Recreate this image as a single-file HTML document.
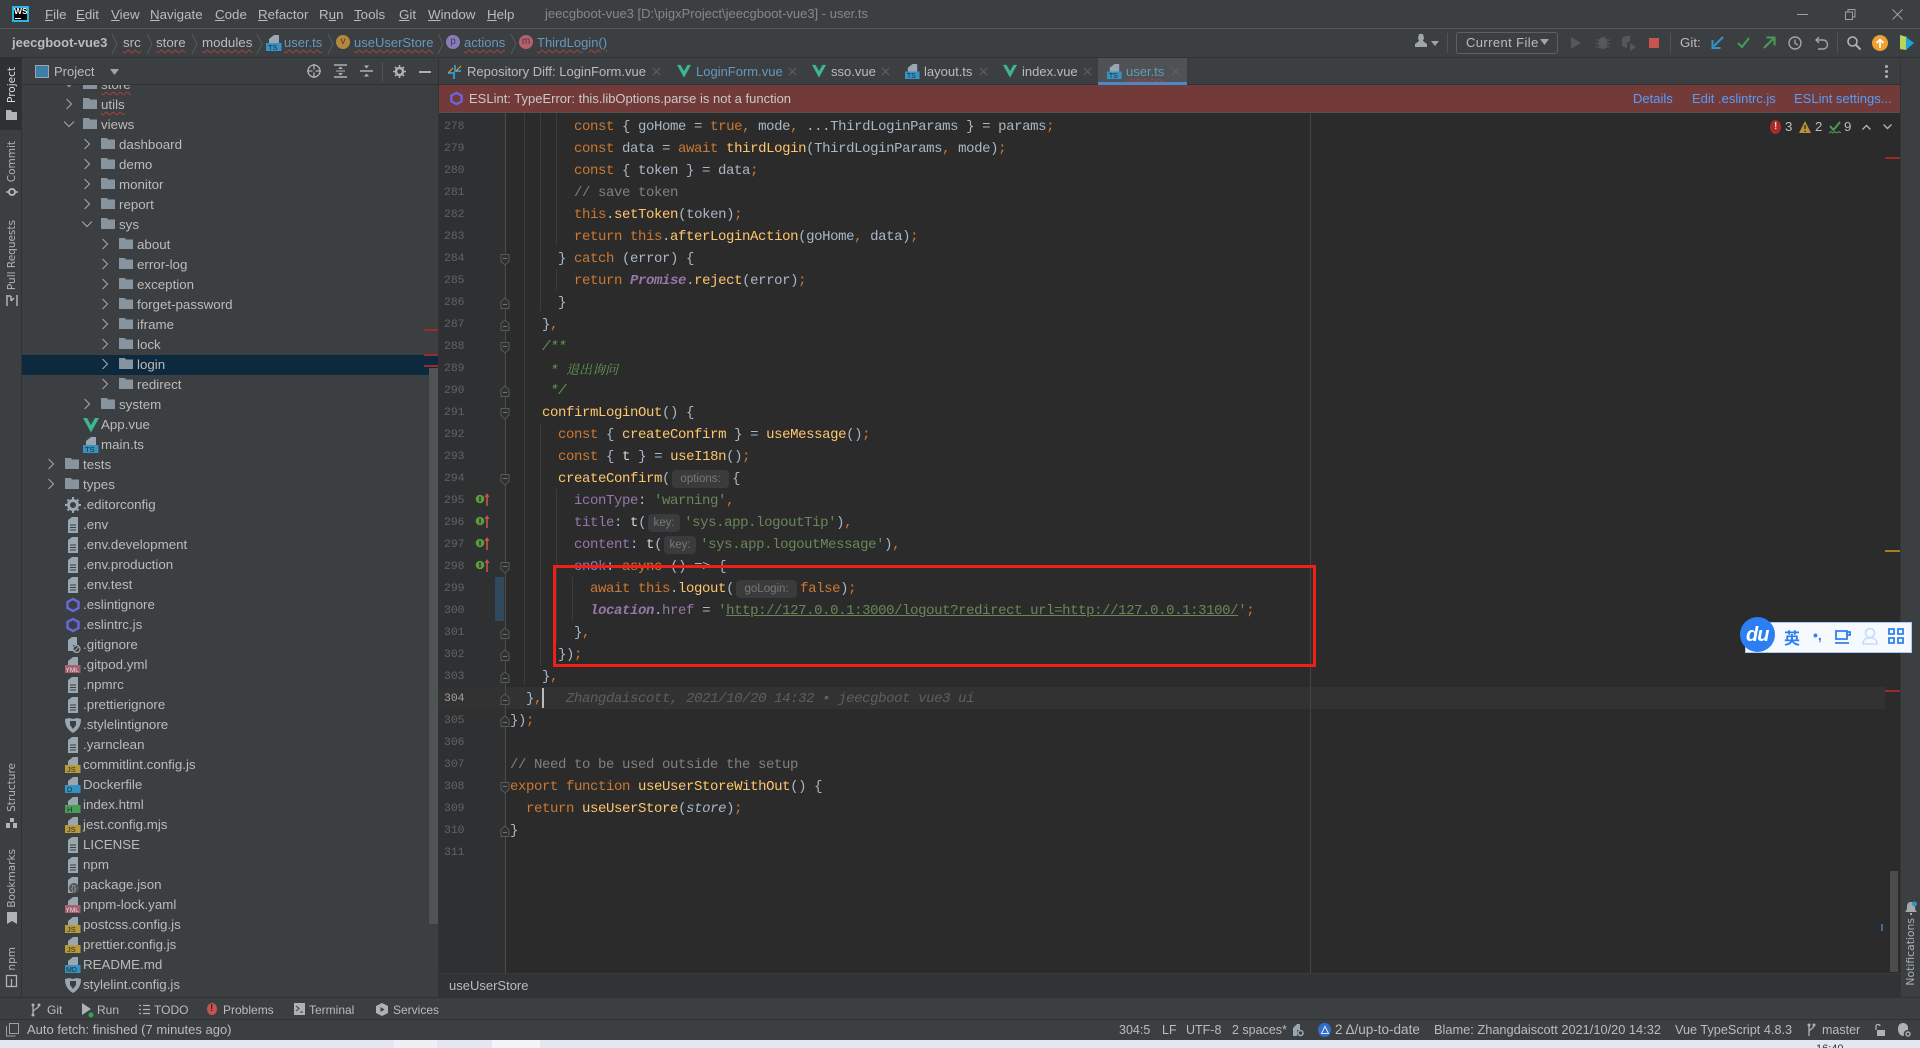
<!DOCTYPE html>
<html lang="en"><head><meta charset="utf-8"><title>user.ts</title>
<style>
html,body{margin:0;padding:0;width:1920px;height:1048px;overflow:hidden;background:#3c3f41}
body{position:relative;font:13.33px "Liberation Sans",sans-serif;color:#bbb}
.a{position:absolute;white-space:nowrap}
.b{position:absolute}
svg{position:absolute;overflow:visible}
.t{position:absolute;white-space:nowrap;height:20px;line-height:20px}
.w{text-decoration:underline wavy #a8403c 1px;text-underline-offset:2px}
.nb{font-size:13px}
.tb{font-size:13px}
.bt{font-size:12px}
#tree{position:absolute;left:22px;top:85px;width:416px;height:912px;overflow:hidden;background:#3c3f41}
#tree .in{position:absolute;left:-22px;top:-10px;width:438px}
.r{position:relative;height:20px;line-height:20px;white-space:nowrap}
.r svg{top:2px}
.r svg.c{top:1px}
.d1{padding-left:83px}.d2{padding-left:101px}.d3{padding-left:119px}.d4{padding-left:137px}
.d1 .i{left:65px}.d2 .i{left:83px}.d3 .i{left:101px}.d4 .i{left:119px}
.d1 .c{left:43px}.d2 .c{left:61px}.d3 .c{left:79px}.d4 .c{left:97px}
.l{position:absolute;left:510px;height:22px;line-height:22px;white-space:pre;font:14px/22px "Liberation Mono","Noto Sans CJK SC",monospace;letter-spacing:-.4px;color:#a9b7c6}
.n{position:absolute;left:444px;height:22px;line-height:22px;font:11.4px/22px "Liberation Mono",monospace;color:#606366}
.k{color:#cc7832}.f{color:#ffc66d}.s{color:#6a8759}.p{color:#9876aa}.m{color:#808080}.o{color:#629755;font-style:italic}
.h{display:inline-block;position:relative;height:22px;vertical-align:top;letter-spacing:0}
.h b{position:absolute;top:2px;left:2px;bottom:2px;background:#3a3b3c;border-radius:4px;font:normal 11.5px/18px "Liberation Sans",sans-serif;color:#787878;text-align:center}
.g{position:absolute;width:1px;background:#3b3b3b}
.v{position:absolute;writing-mode:vertical-rl;transform:rotate(180deg);font:10.5px/14px "DejaVu Sans",sans-serif;color:#b4b4b4;white-space:nowrap}
</style></head><body>
<svg width="0" height="0" style="position:absolute">
<defs>
<symbol id="fo" viewBox="0 0 16 16"><path d="M0 1h6l1 1.500H14V12H0z" fill="#87949d"/></symbol>
<symbol id="cr" viewBox="0 0 16 16"><path d="M5.500 3l5 5-5 5" fill="none" stroke="#9da0a2" stroke-width="1.200"/></symbol>
<symbol id="cd" viewBox="0 0 16 16"><path d="M3 5.500l5 5 5-5" fill="none" stroke="#9da0a2" stroke-width="1.200"/></symbol>
<symbol id="doc" viewBox="0 0 16 16"><path d="M3 3l4-3h6v16H3z" fill="#9aa7b0"/><path d="M5 8h6M5 10.500h6M5 13h6" stroke="#3c3f41" stroke-width="1.100"/></symbol>
<symbol id="vue" viewBox="0 0 16 16"><path d="M0 1h4l4 7 4-7h4L8 15.500z" fill="#3fb68b"/><path d="M4 1h2.500L8 4l1.500-3H12L8 8z" fill="#35495e" opacity=".55"/></symbol>
<symbol id="ts" viewBox="0 0 16 16"><path d="M3 8V4l5-4h5v8z" fill="#9aa7b0"/><rect y="8" width="15.500" height="8" fill="#3592c4"/><text x="2" y="15" font-size="7.500" font-family="Liberation Sans" fill="#2b2b2b">TS</text></symbol>
<symbol id="js" viewBox="0 0 16 16"><path d="M3 8V4l5-4h5v8z" fill="#9aa7b0"/><rect y="8" width="15.500" height="8" fill="#b99a3a"/><text x="2" y="15" font-size="7.500" font-family="Liberation Sans" fill="#2b2b2b">JS</text></symbol>
<symbol id="dk" viewBox="0 0 16 16"><path d="M3 8V4l5-4h5v8z" fill="#9aa7b0"/><rect y="8" width="15.500" height="8" fill="#3592c4"/><text x="2" y="15" font-size="7.500" font-family="Liberation Sans" fill="#2b2b2b">D</text></symbol>
<symbol id="ht" viewBox="0 0 16 16"><path d="M3 8V4l5-4h5v8z" fill="#9aa7b0"/><rect y="8" width="15.500" height="8" fill="#499c54"/><text x="2" y="15" font-size="7.500" font-family="Liberation Sans" fill="#2b2b2b">H</text></symbol>
<symbol id="md" viewBox="0 0 16 16"><path d="M3 8V4l5-4h5v8z" fill="#9aa7b0"/><rect y="8" width="15.500" height="8" fill="#3592c4"/><text x="1" y="15" font-size="7" font-family="Liberation Sans" fill="#2b2b2b">MD</text></symbol>
<symbol id="ym" viewBox="0 0 16 16"><path d="M3 8V4l5-4h5v8z" fill="#9aa7b0"/><rect y="8" width="15.500" height="8" fill="#a55f70"/><text x=".5" y="15" font-size="6.500" font-family="Liberation Sans" fill="#e6d6da">YML</text></symbol>
<symbol id="es" viewBox="0 0 16 16"><path d="M8 2l5.500 3v6L8 14l-5.500-3V5z" fill="none" stroke="#6868e0" stroke-width="2.400"/></symbol>
<symbol id="ge" viewBox="0 0 16 16"><circle cx="8" cy="8" r="4.500" fill="none" stroke="#9aa7b0" stroke-width="3"/><path d="M8 0v16M0 8h16M2.500 2.500l11 11M13.500 2.500l-11 11" stroke="#9aa7b0" stroke-width="2" stroke-dasharray="2.500 11 2.500"/></symbol>
<symbol id="gi" viewBox="0 0 16 16"><path d="M3 9V3l4-3h5v8H8v6H3z" fill="#9aa7b0"/><circle cx="11.500" cy="12" r="3.500" fill="none" stroke="#9aa7b0" stroke-width="1.200"/><path d="M9 14.500l5-5" stroke="#9aa7b0"/></symbol>
<symbol id="sh" viewBox="0 0 16 16"><path d="M0 2l4-1 4 1 4-1 4 1c0 7-3 11-8 14C3 13 0 9 0 2z" fill="#9aa7b0"/><path d="M5 4h6v4l-3 4-3-4z" fill="#3c3f41"/></symbol>
<symbol id="pk" viewBox="0 0 16 16"><path d="M3 9V3l4-3h6v8l-6 8H3z" fill="#9aa7b0"/><circle cx="9" cy="11" r="5" fill="#545759"/><text x="6" y="14" font-size="8" font-family="Liberation Sans" fill="#9aa7b0">{}</text></symbol>
<symbol id="fs" viewBox="0 0 10 12"><path d="M1 .500h8v7l-4 3.500-4-3.500z" fill="#2f3031" stroke="#565859"/><path d="M3 4.500h4" stroke="#707274"/></symbol>
<symbol id="fe" viewBox="0 0 10 12"><path d="M1 11.500h8v-7l-4-3.500-4 3.500z" fill="#2f3031" stroke="#565859"/><path d="M3 7.500h4" stroke="#707274"/></symbol>
<symbol id="ga" viewBox="0 0 16 16"><circle cx="5" cy="8" r="4.300" fill="#5a9e3c"/><path d="M5 5.500v5" stroke="#2b2b2b" stroke-width="1.400"/><path d="M12 15V4" stroke="#c75450" stroke-width="1.600"/><path d="M9.500 6L12 2l2.500 4z" fill="#c75450"/></symbol>
<symbol id="nc" viewBox="0 0 8 22"><path d="M1 1l5 10-5 10" fill="none" stroke="#555859"/></symbol>
<symbol id="x" viewBox="0 0 10 10"><path d="M1 1l8 8M9 1l-8 8" stroke="#5f6365" stroke-width="1.100"/></symbol>
</defs>
</svg>

<!-- title bar -->
<div class="b" style="left:0;top:28px;width:1920px;height:1px;background:#555"></div>
<div class="b" style="left:12px;top:6px;width:13px;height:12px;background:#000;border:2px solid #25b7e8"></div>
<div class="a" style="left:14px;top:6px;color:#fff;font:bold 8.500px/11px 'Liberation Sans',sans-serif">WS</div>
<div class="b" style="left:15px;top:18px;width:6px;height:1px;background:#fff"></div>
<div class="t" style="left:45px;top:5px"><u>F</u>ile</div>
<div class="t" style="left:76px;top:5px"><u>E</u>dit</div>
<div class="t" style="left:111px;top:5px"><u>V</u>iew</div>
<div class="t" style="left:150px;top:5px"><u>N</u>avigate</div>
<div class="t" style="left:215px;top:5px"><u>C</u>ode</div>
<div class="t" style="left:258px;top:5px"><u>R</u>efactor</div>
<div class="t" style="left:319px;top:5px">R<u>u</u>n</div>
<div class="t" style="left:354px;top:5px"><u>T</u>ools</div>
<div class="t" style="left:399px;top:5px"><u>G</u>it</div>
<div class="t" style="left:428px;top:5px"><u>W</u>indow</div>
<div class="t" style="left:487px;top:5px"><u>H</u>elp</div>
<div class="t" style="left:545px;top:4px;color:#85898b;font-size:13px">jeecgboot-vue3 [D:\pigxProject\jeecgboot-vue3] - user.ts</div>
<div class="b" style="left:1797px;top:14px;width:11px;height:1px;background:#a0a0a0"></div>
<svg style="left:1845px;top:9px" width="11" height="11"><path d="M.5 3h7v7.500h-7zM3 3V.5h7v7.500H7.500" fill="none" stroke="#a0a0a0"/></svg>
<svg style="left:1892px;top:9px" width="11" height="11"><path d="M.5.500l10 10M10.500.500l-10 10" stroke="#a0a0a0"/></svg>

<!-- nav bar -->
<div class="b" style="left:0;top:57px;width:1920px;height:1px;background:#2f3133"></div>
<div class="t" style="left:12px;top:33px;font-weight:bold;color:#bbb;font-size:13px">jeecgboot-vue3</div>
<svg style="left:111px;top:33px" width="8" height="22"><use href="#nc"/></svg>
<div class="t w" style="left:123px;top:33px">src</div>
<svg style="left:146px;top:33px" width="8" height="22"><use href="#nc"/></svg>
<div class="t w" style="left:156px;top:33px">store</div>
<svg style="left:191px;top:33px" width="8" height="22"><use href="#nc"/></svg>
<div class="t w" style="left:202px;top:33px">modules</div>
<svg style="left:256px;top:33px" width="8" height="22"><use href="#nc"/></svg>
<svg style="left:266px;top:35px" width="16" height="16"><use href="#ts"/></svg>
<div class="t w nb" style="left:284px;top:33px;color:#6897bb">user.ts</div>
<svg style="left:327px;top:33px" width="8" height="22"><use href="#nc"/></svg>
<div class="a" style="left:336px;top:35px;width:14px;height:14px;border-radius:50%;background:#b6873a;color:#3c3f41;font-size:10px;line-height:14px;text-align:center">v</div>
<div class="t w nb" style="left:354px;top:33px;color:#6897bb">useUserStore</div>
<svg style="left:437px;top:33px" width="8" height="22"><use href="#nc"/></svg>
<div class="a" style="left:446px;top:35px;width:14px;height:14px;border-radius:50%;background:#8a7bbd;color:#3c3f41;font-size:10px;line-height:14px;text-align:center">p</div>
<div class="t w nb" style="left:464px;top:33px;color:#6897bb">actions</div>
<svg style="left:510px;top:33px" width="8" height="22"><use href="#nc"/></svg>
<div class="a" style="left:519px;top:35px;width:14px;height:14px;border-radius:50%;background:#b5606c;color:#3c3f41;font-size:10px;line-height:14px;text-align:center">m</div>
<div class="t w nb" style="left:537px;top:33px;color:#6897bb">ThirdLogin()</div>

<svg style="left:1414px;top:33px" width="16" height="16"><path d="M5 1h4l1 4-1 3 4 3v3H1v-3l4-3-1-3z" fill="#a0a5a8"/></svg>
<svg style="left:1431px;top:41px" width="8" height="5"><path d="M0 0h8L4 5z" fill="#a0a5a8"/></svg>
<div class="b" style="left:1447px;top:33px;width:1px;height:20px;background:#515456"></div>
<div class="b" style="left:1456px;top:32px;width:100px;height:20px;border:1px solid #5e6163;border-radius:3px"></div>
<div class="t" style="left:1466px;top:33px;font-size:13px;letter-spacing:.4px">Current File</div>
<svg style="left:1540px;top:39px" width="9" height="6"><path d="M0 0h9L4.500 6z" fill="#a0a5a8"/></svg>
<svg style="left:1570px;top:36px" width="12" height="14"><path d="M1 1l10 6-10 6z" fill="#555859"/></svg>
<svg style="left:1596px;top:35px" width="14" height="15"><ellipse cx="7" cy="8" rx="4.500" ry="6" fill="#555859"/><path d="M0 5h14M0 8.500h14M0 12h14" stroke="#555859"/></svg>
<svg style="left:1621px;top:35px" width="15" height="16"><path d="M1 3l4-2h4v5L6 8v5L1 11z" fill="#555859"/><path d="M9 8l6 4-6 4z" fill="#555859"/></svg>
<div class="b" style="left:1649px;top:38px;width:10px;height:10px;background:#c75450"></div>
<div class="b" style="left:1670px;top:33px;width:1px;height:20px;background:#515456"></div>
<div class="t" style="left:1680px;top:33px">Git:</div>
<svg style="left:1711px;top:36px" width="13" height="13"><path d="M12 1L3 10M1.500 4v8h8" fill="none" stroke="#3592c4" stroke-width="2"/></svg>
<svg style="left:1737px;top:37px" width="13" height="11"><path d="M1 6l4 4 7-9" fill="none" stroke="#499c54" stroke-width="2"/></svg>
<svg style="left:1763px;top:36px" width="13" height="13"><path d="M1 12l9-9M3.500 1.500H11.500v8" fill="none" stroke="#499c54" stroke-width="2"/></svg>
<svg style="left:1788px;top:36px" width="14" height="14"><circle cx="7" cy="7" r="6" fill="none" stroke="#a0a5a8" stroke-width="1.400"/><path d="M7 3.500V7.500l3 1.500" fill="none" stroke="#a0a5a8" stroke-width="1.300"/></svg>
<svg style="left:1815px;top:36px" width="13" height="14"><path d="M4 1L1 4l3 3M1.500 4H8c6 0 6 9 0 9H3" fill="none" stroke="#a0a5a8" stroke-width="1.400"/></svg>
<div class="b" style="left:1837px;top:33px;width:1px;height:20px;background:#515456"></div>
<svg style="left:1847px;top:36px" width="14" height="14"><circle cx="5.500" cy="5.500" r="4.500" fill="none" stroke="#afb1b3" stroke-width="1.600"/><path d="M9 9l4.500 4.500" stroke="#afb1b3" stroke-width="2"/></svg>
<div class="b" style="left:1872px;top:35px;width:16px;height:16px;border-radius:50%;background:#f0a030"></div>
<svg style="left:1875px;top:38px" width="10" height="10"><path d="M5 10V2M1.500 5L5 1.500 8.500 5" fill="none" stroke="#fff" stroke-width="1.600"/></svg>
<svg style="left:1899px;top:35px" width="15" height="16"><path d="M1 0l7 2-1 13-6-1z" fill="#b7d558"/><path d="M7 2l8 6-8 7z" fill="#1ba5d8"/></svg>

<!-- left stripe -->
<div class="b" style="left:21px;top:58px;width:1px;height:939px;background:#323232"></div>
<div class="b" style="left:0;top:58px;width:21px;height:72px;background:#2e3032"></div>
<div class="v" style="left:5px;top:67px;color:#ddd">Project</div>
<svg style="left:6px;top:110px" width="12" height="10"><path d="M0 0h5l1 2h5v8H0z" fill="#b0b4b6"/></svg>
<div class="v" style="left:5px;top:141px">Commit</div>
<svg style="left:6px;top:186px" width="12" height="12"><circle cx="6" cy="6" r="3" fill="none" stroke="#b0b4b6" stroke-width="2"/><path d="M0 6h3M9 6h3" stroke="#b0b4b6" stroke-width="1.500"/></svg>
<div class="v" style="left:5px;top:220px">Pull Requests</div>
<svg style="left:6px;top:295px" width="12" height="11"><path d="M1 0v11M11 0v11M1 1h4M8 3L5 6M5 1v5" fill="none" stroke="#b0b4b6" stroke-width="1.500"/></svg>
<div class="v" style="left:5px;top:763px">Structure</div>
<svg style="left:6px;top:818px" width="12" height="10"><path d="M4 0h4v4H4zM0 5h4v5H0zM7 5h4v5H7z" fill="#b0b4b6"/></svg>
<div class="v" style="left:5px;top:849px">Bookmarks</div>
<svg style="left:7px;top:912px" width="10" height="12"><path d="M0 0h10v12L5 9l-5 3z" fill="#b0b4b6"/></svg>
<div class="v" style="left:5px;top:947px">npm</div>
<svg style="left:6px;top:975px" width="11" height="12"><path d="M.5.500h10v11H.5zM5.500 4v7.500" fill="none" stroke="#b0b4b6" stroke-width="1.300"/></svg>

<!-- project header -->
<div class="b" style="left:22px;top:84px;width:416px;height:1px;background:#323232"></div>
<svg style="left:35px;top:65px" width="14" height="13"><rect x=".5" y=".5" width="13" height="12" fill="#3d7ea6" stroke="#9aa7b0"/></svg>
<div class="t" style="left:54px;top:62px;font-size:13px">Project</div>
<svg style="left:110px;top:69px" width="9" height="6"><path d="M0 0h9L4.500 6z" fill="#a0a5a8"/></svg>
<svg style="left:307px;top:64px" width="14" height="14"><circle cx="7" cy="7" r="6" fill="none" stroke="#afb1b3" stroke-width="1.300"/><path d="M7 0v5.500M7 8.500V14M0 7h5.500M8.500 7H14" stroke="#afb1b3" stroke-width="1.300"/></svg>
<svg style="left:334px;top:64px" width="13" height="14"><path d="M0 1h13M0 13h13" stroke="#afb1b3" stroke-width="1.500"/><path d="M4 5L6.500 2.500 9 5zM4 9l2.500 2.500L9 9z" fill="#afb1b3"/><path d="M2 7h9" stroke="#afb1b3"/></svg>
<svg style="left:360px;top:64px" width="13" height="14"><path d="M0 7h13" stroke="#afb1b3" stroke-width="1.500"/><path d="M4 1.500l2.500 3 2.500-3zM4 12.500l2.500-3 2.500 3z" fill="#afb1b3"/></svg>
<div class="b" style="left:382px;top:62px;width:1px;height:20px;background:#515456"></div>
<svg style="left:393px;top:65px" width="13" height="13"><circle cx="6.500" cy="6.500" r="3.500" fill="none" stroke="#afb1b3" stroke-width="2.500"/><path d="M6.500 0v13M0 6.500h13M2 2l9 9M11 2l-9 9" stroke="#afb1b3" stroke-width="1.600" stroke-dasharray="2 9 2"/></svg>
<div class="b" style="left:419px;top:71px;width:12px;height:2px;background:#afb1b3"></div>

<!-- project tree -->
<div id="tree"><div class="in">
<div class="r d2 w0"><svg class="c" width="16" height="16"><use href="#cd"/></svg><svg class="i" width="16" height="16"><use href="#fo"/></svg><span class="w">store</span></div>
<div class="r d2"><svg class="c" width="16" height="16"><use href="#cr"/></svg><svg class="i" width="16" height="16"><use href="#fo"/></svg><span class="w">utils</span></div>
<div class="r d2"><svg class="c" width="16" height="16"><use href="#cd"/></svg><svg class="i" width="16" height="16"><use href="#fo"/></svg>views</div>
<div class="r d3"><svg class="c" width="16" height="16"><use href="#cr"/></svg><svg class="i" width="16" height="16"><use href="#fo"/></svg>dashboard</div>
<div class="r d3"><svg class="c" width="16" height="16"><use href="#cr"/></svg><svg class="i" width="16" height="16"><use href="#fo"/></svg>demo</div>
<div class="r d3"><svg class="c" width="16" height="16"><use href="#cr"/></svg><svg class="i" width="16" height="16"><use href="#fo"/></svg>monitor</div>
<div class="r d3"><svg class="c" width="16" height="16"><use href="#cr"/></svg><svg class="i" width="16" height="16"><use href="#fo"/></svg>report</div>
<div class="r d3"><svg class="c" width="16" height="16"><use href="#cd"/></svg><svg class="i" width="16" height="16"><use href="#fo"/></svg>sys</div>
<div class="r d4"><svg class="c" width="16" height="16"><use href="#cr"/></svg><svg class="i" width="16" height="16"><use href="#fo"/></svg>about</div>
<div class="r d4"><svg class="c" width="16" height="16"><use href="#cr"/></svg><svg class="i" width="16" height="16"><use href="#fo"/></svg>error-log</div>
<div class="r d4"><svg class="c" width="16" height="16"><use href="#cr"/></svg><svg class="i" width="16" height="16"><use href="#fo"/></svg>exception</div>
<div class="r d4"><svg class="c" width="16" height="16"><use href="#cr"/></svg><svg class="i" width="16" height="16"><use href="#fo"/></svg>forget-password</div>
<div class="r d4"><svg class="c" width="16" height="16"><use href="#cr"/></svg><svg class="i" width="16" height="16"><use href="#fo"/></svg>iframe</div>
<div class="r d4"><svg class="c" width="16" height="16"><use href="#cr"/></svg><svg class="i" width="16" height="16"><use href="#fo"/></svg>lock</div>
<div class="r d4" style="background:#0d293e"><svg class="c" width="16" height="16"><use href="#cr"/></svg><svg class="i" width="16" height="16"><use href="#fo"/></svg>login</div>
<div class="r d4"><svg class="c" width="16" height="16"><use href="#cr"/></svg><svg class="i" width="16" height="16"><use href="#fo"/></svg>redirect</div>
<div class="r d3"><svg class="c" width="16" height="16"><use href="#cr"/></svg><svg class="i" width="16" height="16"><use href="#fo"/></svg>system</div>
<div class="r d2"><svg class="i" width="16" height="16"><use href="#vue"/></svg>App.vue</div>
<div class="r d2"><svg class="i" width="16" height="16"><use href="#ts"/></svg>main.ts</div>
<div class="r d1"><svg class="c" width="16" height="16"><use href="#cr"/></svg><svg class="i" width="16" height="16"><use href="#fo"/></svg>tests</div>
<div class="r d1"><svg class="c" width="16" height="16"><use href="#cr"/></svg><svg class="i" width="16" height="16"><use href="#fo"/></svg>types</div>
<div class="r d1"><svg class="i" width="16" height="16"><use href="#ge"/></svg>.editorconfig</div>
<div class="r d1"><svg class="i" width="16" height="16"><use href="#doc"/></svg>.env</div>
<div class="r d1"><svg class="i" width="16" height="16"><use href="#doc"/></svg>.env.development</div>
<div class="r d1"><svg class="i" width="16" height="16"><use href="#doc"/></svg>.env.production</div>
<div class="r d1"><svg class="i" width="16" height="16"><use href="#doc"/></svg>.env.test</div>
<div class="r d1"><svg class="i" width="16" height="16"><use href="#es"/></svg>.eslintignore</div>
<div class="r d1"><svg class="i" width="16" height="16"><use href="#es"/></svg>.eslintrc.js</div>
<div class="r d1"><svg class="i" width="16" height="16"><use href="#gi"/></svg>.gitignore</div>
<div class="r d1"><svg class="i" width="16" height="16"><use href="#ym"/></svg>.gitpod.yml</div>
<div class="r d1"><svg class="i" width="16" height="16"><use href="#doc"/></svg>.npmrc</div>
<div class="r d1"><svg class="i" width="16" height="16"><use href="#doc"/></svg>.prettierignore</div>
<div class="r d1"><svg class="i" width="16" height="16"><use href="#sh"/></svg>.stylelintignore</div>
<div class="r d1"><svg class="i" width="16" height="16"><use href="#doc"/></svg>.yarnclean</div>
<div class="r d1"><svg class="i" width="16" height="16"><use href="#js"/></svg>commitlint.config.js</div>
<div class="r d1"><svg class="i" width="16" height="16"><use href="#dk"/></svg>Dockerfile</div>
<div class="r d1"><svg class="i" width="16" height="16"><use href="#ht"/></svg>index.html</div>
<div class="r d1"><svg class="i" width="16" height="16"><use href="#js"/></svg>jest.config.mjs</div>
<div class="r d1"><svg class="i" width="16" height="16"><use href="#doc"/></svg>LICENSE</div>
<div class="r d1"><svg class="i" width="16" height="16"><use href="#doc"/></svg>npm</div>
<div class="r d1"><svg class="i" width="16" height="16"><use href="#pk"/></svg>package.json</div>
<div class="r d1"><svg class="i" width="16" height="16"><use href="#ym"/></svg>pnpm-lock.yaml</div>
<div class="r d1"><svg class="i" width="16" height="16"><use href="#js"/></svg>postcss.config.js</div>
<div class="r d1"><svg class="i" width="16" height="16"><use href="#js"/></svg>prettier.config.js</div>
<div class="r d1"><svg class="i" width="16" height="16"><use href="#md"/></svg>README.md</div>
<div class="r d1"><svg class="i" width="16" height="16"><use href="#sh"/></svg>stylelint.config.js</div>
</div></div>
<div class="b" style="left:429px;top:368px;width:9px;height:556px;background:#505354"></div>
<div class="b" style="left:424px;top:329px;width:14px;height:2px;background:#9e2927"></div>
<div class="b" style="left:424px;top:354px;width:14px;height:2px;background:#9e2927"></div>
<div class="b" style="left:424px;top:365px;width:14px;height:2px;background:#9e2927"></div>
<div class="b" style="left:438px;top:58px;width:1px;height:939px;background:#323232"></div>

<!-- tabs -->
<div class="b" style="left:439px;top:84px;width:1461px;height:1px;background:#323232"></div>
<svg style="left:447px;top:64px" width="15" height="16"><path d="M8 1v6h6M7 15V9H1" fill="none" stroke="#3592c4" stroke-width="2"/><path d="M1 9l5-5M9 7l5-5" stroke="#f0a030" stroke-width="1"/></svg>
<div class="t tb" style="left:467px;top:62px">Repository Diff: LoginForm.vue</div>
<svg style="left:652px;top:67px" width="9" height="9"><use href="#x"/></svg>
<svg style="left:677px;top:64px" width="14" height="14"><use href="#vue"/></svg>
<div class="t tb" style="left:696px;top:62px;color:#6897bb">LoginForm.vue</div>
<svg style="left:788px;top:67px" width="9" height="9"><use href="#x"/></svg>
<svg style="left:812px;top:64px" width="14" height="14"><use href="#vue"/></svg>
<div class="t tb" style="left:831px;top:62px">sso.vue</div>
<svg style="left:881px;top:67px" width="9" height="9"><use href="#x"/></svg>
<svg style="left:905px;top:64px" width="15" height="15"><use href="#ts"/></svg>
<div class="t tb" style="left:924px;top:62px">layout.ts</div>
<svg style="left:979px;top:67px" width="9" height="9"><use href="#x"/></svg>
<svg style="left:1003px;top:64px" width="14" height="14"><use href="#vue"/></svg>
<div class="t tb" style="left:1022px;top:62px">index.vue</div>
<svg style="left:1083px;top:67px" width="9" height="9"><use href="#x"/></svg>
<div class="b" style="left:1098px;top:58px;width:89px;height:24px;background:#4e5254"></div>
<div class="b" style="left:1098px;top:82px;width:89px;height:3px;background:#4a88c7"></div>
<svg style="left:1107px;top:64px" width="15" height="15"><use href="#ts"/></svg>
<div class="t w tb" style="left:1126px;top:62px;color:#6897bb">user.ts</div>
<svg style="left:1171px;top:67px" width="9" height="9"><use href="#x"/></svg>
<div class="b" style="left:1885px;top:65px;width:3px;height:3px;background:#afb1b3;border-radius:50%;box-shadow:0 5px #afb1b3,0 10px #afb1b3"></div>

<!-- banner -->
<div class="b" style="left:439px;top:85px;width:1461px;height:27px;background:#733a3a"></div>
<div class="b" style="left:439px;top:112px;width:1461px;height:1px;background:#515151"></div>
<svg style="left:449px;top:91px" width="15" height="15"><use href="#es"/></svg>
<div class="t" style="left:469px;top:89px;font-size:13px;color:#c9c9c9">ESLint: TypeError: this.libOptions.parse is not a function</div>
<div class="t" style="left:1633px;top:89px;color:#589df6;font-size:13px">Details</div>
<div class="t" style="left:1692px;top:89px;color:#589df6;font-size:13px">Edit .eslintrc.js</div>
<div class="t" style="left:1794px;top:89px;color:#589df6;font-size:13px">ESLint settings...</div>

<!-- editor -->
<div class="b" style="left:439px;top:113px;width:1461px;height:860px;background:#2b2b2b"></div>
<div class="b" style="left:439px;top:113px;width:66px;height:860px;background:#2f3031"></div>
<div class="b" style="left:439px;top:687px;width:1446px;height:22px;background:#323232"></div>
<div class="b" style="left:505px;top:113px;width:1px;height:860px;background:#4a4c4e"></div>
<div class="b" style="left:1310px;top:113px;width:1px;height:860px;background:#444"></div>
<div class="b" style="left:495px;top:577px;width:9px;height:44px;background:#31495c"></div>

<div class="g" style="left:524px;top:113px;height:572px"></div>
<div class="g" style="left:540px;top:113px;height:198px"></div>
<div class="g" style="left:556px;top:113px;height:132px"></div>
<div class="g" style="left:556px;top:269px;height:22px"></div>
<div class="g" style="left:540px;top:423px;height:242px"></div>
<div class="g" style="left:556px;top:489px;height:154px"></div>
<div class="g" style="left:572px;top:577px;height:44px"></div>

<div class="b" style="left:0;top:1px;width:1920px;height:0">
<div class="n" style="top:115px">278</div><div class="n" style="top:137px">279</div><div class="n" style="top:159px">280</div><div class="n" style="top:181px">281</div><div class="n" style="top:203px">282</div><div class="n" style="top:225px">283</div><div class="n" style="top:247px">284</div><div class="n" style="top:269px">285</div><div class="n" style="top:291px">286</div><div class="n" style="top:313px">287</div><div class="n" style="top:335px">288</div><div class="n" style="top:357px">289</div><div class="n" style="top:379px">290</div><div class="n" style="top:401px">291</div><div class="n" style="top:423px">292</div><div class="n" style="top:445px">293</div><div class="n" style="top:467px">294</div><div class="n" style="top:489px">295</div><div class="n" style="top:511px">296</div><div class="n" style="top:533px">297</div><div class="n" style="top:555px">298</div><div class="n" style="top:577px">299</div><div class="n" style="top:599px">300</div><div class="n" style="top:621px">301</div><div class="n" style="top:643px">302</div><div class="n" style="top:665px">303</div><div class="n" style="top:687px;color:#a4a3a3">304</div><div class="n" style="top:709px">305</div><div class="n" style="top:731px">306</div><div class="n" style="top:753px">307</div><div class="n" style="top:775px">308</div><div class="n" style="top:797px">309</div><div class="n" style="top:819px">310</div><div class="n" style="top:841px">311</div>

<svg style="left:475px;top:490px" width="16" height="16"><use href="#ga"/></svg>
<svg style="left:475px;top:512px" width="16" height="16"><use href="#ga"/></svg>
<svg style="left:475px;top:534px" width="16" height="16"><use href="#ga"/></svg>
<svg style="left:475px;top:556px" width="16" height="16"><use href="#ga"/></svg>

<svg style="left:500px;top:253px" width="10" height="12"><use href="#fs"/></svg>
<svg style="left:500px;top:296px" width="10" height="12"><use href="#fe"/></svg>
<svg style="left:500px;top:318px" width="10" height="12"><use href="#fe"/></svg>
<svg style="left:500px;top:341px" width="10" height="12"><use href="#fs"/></svg>
<svg style="left:500px;top:384px" width="10" height="12"><use href="#fe"/></svg>
<svg style="left:500px;top:407px" width="10" height="12"><use href="#fs"/></svg>
<svg style="left:500px;top:473px" width="10" height="12"><use href="#fs"/></svg>
<svg style="left:500px;top:561px" width="10" height="12"><use href="#fs"/></svg>
<svg style="left:500px;top:626px" width="10" height="12"><use href="#fe"/></svg>
<svg style="left:500px;top:648px" width="10" height="12"><use href="#fe"/></svg>
<svg style="left:500px;top:670px" width="10" height="12"><use href="#fe"/></svg>
<svg style="left:500px;top:692px" width="10" height="12"><use href="#fe"/></svg>
<svg style="left:500px;top:714px" width="10" height="12"><use href="#fe"/></svg>
<svg style="left:500px;top:781px" width="10" height="12"><use href="#fs"/></svg>
<svg style="left:500px;top:824px" width="10" height="12"><use href="#fe"/></svg>

<div class="l" style="top:115px">        <span class="k">const</span> { goHome = <span class="k">true</span><span class="k">,</span> mode<span class="k">,</span> ...ThirdLoginParams } = params<span class="k">;</span></div>
<div class="l" style="top:137px">        <span class="k">const</span> data = <span class="k">await</span> <span class="f">thirdLogin</span>(ThirdLoginParams<span class="k">,</span> mode)<span class="k">;</span></div>
<div class="l" style="top:159px">        <span class="k">const</span> { token } = data<span class="k">;</span></div>
<div class="l" style="top:181px">        <span class="m">// save token</span></div>
<div class="l" style="top:203px">        <span class="k">this</span>.<span class="f">setToken</span>(token)<span class="k">;</span></div>
<div class="l" style="top:225px">        <span class="k">return this</span>.<span class="f">afterLoginAction</span>(goHome<span class="k">,</span> data)<span class="k">;</span></div>
<div class="l" style="top:247px">      } <span class="k">catch</span> (error) {</div>
<div class="l" style="top:269px">        <span class="k">return</span> <span class="p" style="font-style:italic;font-weight:bold">Promise</span>.<span class="f">reject</span>(error)<span class="k">;</span></div>
<div class="l" style="top:291px">      }</div>
<div class="l" style="top:313px">    }<span class="k">,</span></div>
<div class="l" style="top:335px">    <span class="o">/**</span></div>
<div class="l" style="top:357px">     <span class="o">* <span style="font-size:13px;font-family:'Noto Serif CJK SC',serif;letter-spacing:0">退出询问</span></span></div>
<div class="l" style="top:379px">     <span class="o">*/</span></div>
<div class="l" style="top:401px">    <span class="f">confirmLoginOut</span>() {</div>
<div class="l" style="top:423px">      <span class="k">const</span> { <span class="f">createConfirm</span> } = <span class="f">useMessage</span>()<span class="k">;</span></div>
<div class="l" style="top:445px">      <span class="k">const</span> { <span style="color:#d0d8e0">t</span> } = <span class="f">useI18n</span>()<span class="k">;</span></div>
<div class="l" style="top:467px">      <span class="f">createConfirm</span>(<span class="h" style="width:62px"><b style="width:57px">options:</b></span>{</div>
<div class="l" style="top:489px">        <span class="p">iconType</span>: <span class="s">'warning'</span><span class="k">,</span></div>
<div class="l" style="top:511px">        <span class="p">title</span>: <span style="color:#d0d8e0">t</span>(<span class="h" style="width:38px"><b style="width:32px">key:</b></span><span class="s">'sys.app.logoutTip'</span>)<span class="k">,</span></div>
<div class="l" style="top:533px">        <span class="p">content</span>: <span style="color:#d0d8e0">t</span>(<span class="h" style="width:38px"><b style="width:32px">key:</b></span><span class="s">'sys.app.logoutMessage'</span>)<span class="k">,</span></div>
<div class="l" style="top:555px">        <span class="p">onOk</span>: <span class="k">async</span> () =&gt; {</div>
<div class="l" style="top:577px">          <span class="k">await this</span>.<span class="f">logout</span>(<span class="h" style="width:66px"><b style="width:61px">goLogin:</b></span><span class="k">false</span>)<span class="k">;</span></div>
<div class="l" style="top:599px">          <span class="p" style="font-style:italic;font-weight:bold">location</span>.<span class="p">href</span> = <span class="s">'<u>http://127.0.0.1:3000/logout?redirect_url=http://127.0.0.1:3100/</u>'</span><span class="k">;</span></div>
<div class="l" style="top:621px">        }<span class="k">,</span></div>
<div class="l" style="top:643px">      })<span class="k">;</span></div>
<div class="l" style="top:665px">    }<span class="k">,</span></div>
<div class="l" style="top:687px">  }<span class="k">,</span>   <span style="color:#5a6062;font-style:italic">Zhangdaiscott, 2021/10/20 14:32 • jeecgboot vue3 ui</span></div>
<div class="b" style="left:542px;top:687px;width:2px;height:20px;background:#bbb"></div>
<div class="l" style="top:709px">})<span class="k">;</span></div>
<div class="l" style="top:753px"><span class="m">// Need to be used outside the setup</span></div>
<div class="l" style="top:775px"><span class="k">export function</span> <span class="f">useUserStoreWithOut</span>() {</div>
<div class="l" style="top:797px">  <span class="k">return</span> <span class="f">useUserStore</span>(<span style="font-style:italic">store</span>)<span class="k">;</span></div>
<div class="l" style="top:819px">}</div>
</div>

<!-- red box -->
<div class="b" style="left:553px;top:565px;width:757px;height:96px;border:3px solid #f01f17"></div>

<!-- inspections -->
<div class="b" style="left:1770px;top:120px;width:11px;height:14px;border-radius:50%;background:#a82a2a"></div>
<div class="a" style="left:1774px;top:121px;color:#ddd;font:bold 10px/12px 'Liberation Sans',sans-serif">!</div>
<div class="t" style="left:1785px;top:117px">3</div>
<svg style="left:1799px;top:121px" width="12" height="12"><path d="M6 0l6 12H0z" fill="#b9913a"/><path d="M6 4v4M6 9.500v1.500" stroke="#2b2b2b" stroke-width="1.300"/></svg>
<div class="t" style="left:1815px;top:117px">2</div>
<svg style="left:1829px;top:121px" width="12" height="14"><path d="M1 5l3.500 4L11 1" fill="none" stroke="#499c54" stroke-width="2"/><path d="M0 12l2-1.500 2 1.500 2-1.500 2 1.500 2-1.500 2 1.500" fill="none" stroke="#499c54"/></svg>
<div class="t" style="left:1844px;top:117px">9</div>
<svg style="left:1862px;top:124px" width="9" height="6"><path d="M.5 5.500l4-4 4 4" fill="none" stroke="#afb1b3" stroke-width="1.400"/></svg>
<svg style="left:1883px;top:124px" width="9" height="6"><path d="M.5.500l4 4 4-4" fill="none" stroke="#afb1b3" stroke-width="1.400"/></svg>
<div class="b" style="left:1885px;top:157px;width:15px;height:2px;background:#9e2927"></div>
<div class="b" style="left:1885px;top:550px;width:15px;height:2px;background:#a87c20"></div>
<div class="b" style="left:1885px;top:690px;width:15px;height:2px;background:#9e2927"></div>
<div class="b" style="left:1890px;top:871px;width:8px;height:101px;background:#4c4c4c"></div>
<div class="b" style="left:1881px;top:924px;width:2px;height:7px;background:#3b6f9f"></div>

<!-- breadcrumb bottom -->
<div class="b" style="left:439px;top:973px;width:1461px;height:24px;background:#313335;border-top:1px solid #3a3c3e;box-sizing:border-box"></div>
<div class="t tb" style="left:449px;top:976px;color:#bbb">useUserStore</div>

<!-- right stripe -->
<div class="b" style="left:1900px;top:58px;width:20px;height:939px;background:#3c3f41;border-left:1px solid #333537;box-sizing:border-box"></div>
<svg style="left:1905px;top:901px" width="13" height="14"><path d="M6 1c-3 0-4 2-4 5 0 3-1 4-2 5h12c-1-1-2-2-2-5 0-3-1-5-4-5zM5 12h2v2H5z" fill="#a6a9ab"/><circle cx="9.500" cy="3" r="2.500" fill="#3592c4"/></svg>
<div class="v" style="left:1904px;top:918px;font-size:10.800px;color:#a9b0b5">Notifications</div>

<!-- bottom toolbar -->
<div class="b" style="left:0;top:997px;width:1920px;height:1px;background:#323232"></div>
<div class="b" style="left:0;top:1019px;width:1920px;height:1px;background:#323232"></div>
<svg style="left:31px;top:1003px" width="10" height="14"><circle cx="2" cy="2" r="1.500" fill="#afb1b3"/><circle cx="8" cy="2" r="1.500" fill="#afb1b3"/><circle cx="2" cy="12" r="1.500" fill="#afb1b3"/><path d="M2 2v10M8 2c0 4-6 4-6 7" fill="none" stroke="#afb1b3" stroke-width="1.300"/></svg>
<div class="t bt" style="left:47px;top:1000px">Git</div>
<svg style="left:82px;top:1003px" width="12" height="15"><path d="M0 0l9 6-9 6z" fill="#afb1b3"/><circle cx="9" cy="12" r="2.500" fill="#2fa84a"/></svg>
<div class="t bt" style="left:97px;top:1000px">Run</div>
<svg style="left:139px;top:1004px" width="11" height="11"><path d="M0 1.500h2M4 1.500h7M0 5.500h2M4 5.500h7M0 9.500h2M4 9.500h7" stroke="#afb1b3" stroke-width="1.300"/></svg>
<div class="t bt" style="left:154px;top:1000px">TODO</div>
<div class="b" style="left:207px;top:1003px;width:10px;height:12px;border-radius:50%;background:#c75450"></div>
<div class="a" style="left:210px;top:1003px;color:#2b2b2b;font:bold 10px/12px 'Liberation Sans',sans-serif">!</div>
<div class="t bt" style="left:223px;top:1000px">Problems</div>
<svg style="left:294px;top:1003px" width="11" height="12"><path d="M0 0h11v12H0z" fill="#afb1b3"/><path d="M2 3l3 2.500L2 8M6 9h3" fill="none" stroke="#3c3f41"/></svg>
<div class="t bt" style="left:309px;top:1000px">Terminal</div>
<svg style="left:376px;top:1003px" width="12" height="13"><path d="M6 0l6 3v7l-6 3-6-3V3z" fill="#afb1b3"/><path d="M4.500 4l4 2.500-4 2.500z" fill="#3c3f41"/></svg>
<div class="t bt" style="left:393px;top:1000px">Services</div>

<!-- status bar -->
<svg style="left:6px;top:1023px" width="13" height="14"><path d="M3.500.5h9v10h-9zM.5 3v10h9" fill="none" stroke="#9aa0a3"/></svg>
<div class="t" style="left:27px;top:1020px;font-size:13px">Auto fetch: finished (7 minutes ago)</div>
<div class="t" style="left:1119px;top:1020px;font-size:12.500px">304:5</div>
<div class="t" style="left:1162px;top:1020px;font-size:12.500px">LF</div>
<div class="t" style="left:1186px;top:1020px;font-size:12.500px">UTF-8</div>
<div class="t" style="left:1232px;top:1020px;font-size:12.500px">2 spaces*</div>
<svg style="left:1292px;top:1023px" width="12" height="14"><path d="M1 5l4-4h3v6H5v6H1z" fill="#9aa7b0"/><circle cx="8.500" cy="10" r="2.500" fill="none" stroke="#9aa7b0" stroke-width="1.600"/></svg>
<div class="b" style="left:1318px;top:1023px;width:13px;height:14px;border-radius:50%;background:#2f6fc9"></div>
<svg style="left:1321px;top:1026px" width="8" height="8"><path d="M4 .5l3.500 7h-7z" fill="none" stroke="#dfe8f5"/></svg>
<div class="t" style="left:1335px;top:1020px;font-size:13.500px">2 Δ/up-to-date</div>
<div class="t" style="left:1434px;top:1020px;font-size:12.800px">Blame: Zhangdaiscott 2021/10/20 14:32</div>
<div class="t" style="left:1675px;top:1020px;font-size:12.700px">Vue TypeScript 4.8.3</div>
<svg style="left:1807px;top:1023px" width="9" height="14"><circle cx="2" cy="2" r="1.500" fill="#afb1b3"/><circle cx="7" cy="2" r="1.500" fill="#afb1b3"/><path d="M2 2v11M7 2c0 4-5 4-5 7" fill="none" stroke="#afb1b3" stroke-width="1.300"/></svg>
<div class="t" style="left:1822px;top:1020px;font-size:12.500px">master</div>
<svg style="left:1873px;top:1024px" width="12" height="12"><path d="M3 6V2c0-2 4-2 4 0" fill="none" stroke="#afb1b3" stroke-width="1.300"/><rect x="4" y="6" width="8" height="6" fill="#afb1b3"/></svg>
<svg style="left:1897px;top:1023px" width="14" height="14"><path d="M6 0c3 0 5 2 5 5v2c-3 0-5 2-4 6-4 0-6-3-6-7s2-6 5-6z" fill="#afb1b3"/><circle cx="11" cy="11" r="2" fill="none" stroke="#afb1b3" stroke-width="1.400"/></svg>

<!-- desktop strip -->
<div class="b" style="left:0;top:1040px;width:1920px;height:8px;background:#e3e7ef;overflow:hidden">
<div class="b" style="left:394px;top:0;width:43px;height:8px;background:#eef0f5"></div>
<div class="b" style="left:492px;top:0;width:48px;height:8px;background:#f2f4f8"></div>
<div class="a" style="left:1816px;top:3px;color:#333;font:11px/12px 'Liberation Sans',sans-serif">16:40</div>
</div>

<!-- IME -->
<div class="b" style="left:1745px;top:622px;width:165px;height:29px;background:#f6f9fe;border:1px solid #a9cdf8;box-sizing:content-box"></div>
<div class="b" style="left:1740px;top:617px;width:35px;height:35px;border-radius:50%;background:#2b7ff2"></div>
<div class="a" style="left:1746px;top:624px;color:#fff;font:italic bold 20px/22px 'Liberation Sans',sans-serif;letter-spacing:-1px">du</div>
<div class="a" style="left:1784px;top:627px;color:#2f80ed;font:bold 16px/20px 'Noto Sans CJK SC',sans-serif">英</div>
<div class="a" style="left:1813px;top:625px;color:#2f80ed;font:bold 14px/20px 'Liberation Sans',sans-serif">•,</div>
<svg style="left:1835px;top:630px" width="17" height="15"><path d="M1 1h11v8H1zM12 2h3v3h-3M0 13h14" fill="none" stroke="#2f80ed" stroke-width="1.800"/></svg>
<svg style="left:1862px;top:627px" width="16" height="18"><circle cx="8" cy="6" r="4.500" fill="none" stroke="#c4dcfa" stroke-width="1.600"/><path d="M1 17c0-5 3-6 7-6s7 1 7 6z" fill="none" stroke="#c4dcfa" stroke-width="1.600"/></svg>
<svg style="left:1888px;top:628px" width="16" height="16"><path d="M1 1h5v5H1zM10 1h5v5h-5zM1 10h5v5H1zM10 10h5v5h-5z" fill="none" stroke="#2f80ed" stroke-width="1.800"/></svg>
</body></html>
